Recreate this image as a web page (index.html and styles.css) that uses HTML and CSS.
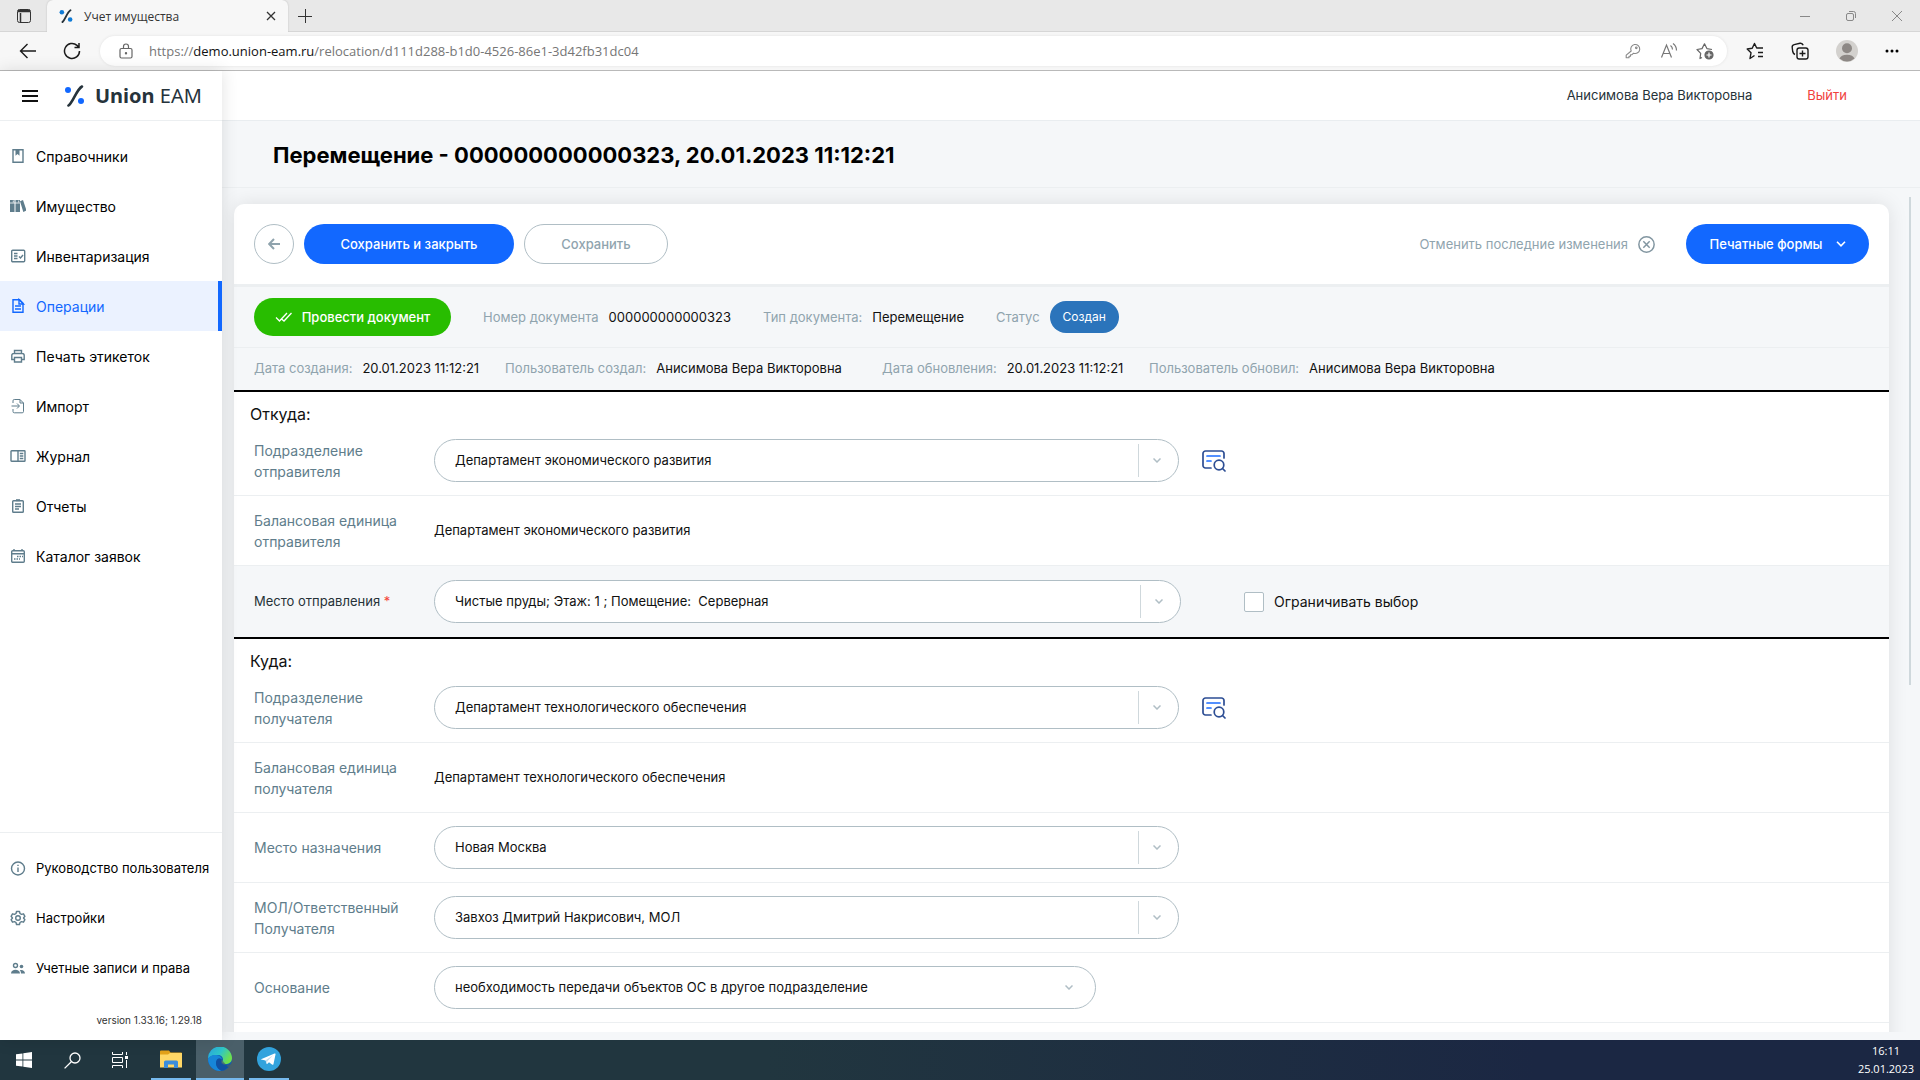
FILE: index.html
```html
<!DOCTYPE html>
<html lang="ru">
<head>
<meta charset="utf-8">
<meta name="viewport" content="width=device-width, initial-scale=1">
<title>Учет имущества</title>
<link rel="stylesheet" href="styles.css">
</head>
<body>
<div class="screen">

  <div class="tabstrip">
    <button class="plain tab-actions" aria-label="Вкладки"><svg width="16" height="16" viewBox="0 0 16 16" fill="none" stroke="#333"><rect x="1.5" y="1.500" width="13" height="13" rx="2"/><path d="M2 3.500h12M2 2.500h12M4.500 5v9.500" stroke-width="1.500"/></svg></button>
    <div class="tab">
      <svg width="14" height="14" viewBox="0 0 21 22"><circle cx="4" cy="5" r="3.600" fill="#0f7bd6"/><circle cx="17" cy="16.500" r="3.600" fill="#0f7bd6"/><path d="M17.500 2C12.500 5 9 17 5 20.500" stroke="#26333b" stroke-width="3" fill="none" stroke-linecap="round"/></svg>
      <span class="tab-title">Учет имущества</span>
      <button class="plain" aria-label="Закрыть вкладку"><svg width="10" height="10" viewBox="0 0 10 10" stroke="#333" stroke-width="1.300"><path d="M1 1l8 8M9 1l-8 8"/></svg></button>
    </div>
    <button class="plain tab-new" aria-label="Новая вкладка"><svg width="14" height="14" viewBox="0 0 14 14" stroke="#333"><path d="M7.500 0v14M0 7.500h14"/></svg></button>
    <div class="win-controls">
      <button class="plain" aria-label="Свернуть"><svg width="10" height="10" viewBox="0 0 10 10" stroke="#888"><path d="M0 5.500h10"/></svg></button>
      <button class="plain" aria-label="Восстановить"><svg width="10" height="10" viewBox="0 0 10 10" stroke="#888" fill="none"><rect x=".5" y="2.500" width="7" height="7" rx="1.500"/><path d="M3 .5h4.500a2 2 0 0 1 2 2V7"/></svg></button>
      <button class="plain" aria-label="Закрыть"><svg width="10" height="10" viewBox="0 0 10 10" stroke="#888"><path d="M0 0l10 10M10 0L0 10"/></svg></button>
    </div>
  </div>

  <div class="toolbar">
    <button class="plain" aria-label="Назад"><svg width="18" height="18" viewBox="0 0 18 18" stroke="#1b1b1b" stroke-width="1.400" fill="none"><path d="M17 9H1.500M8.500 2l-7 7 7 7"/></svg></button>
    <button class="plain" aria-label="Обновить"><svg width="18" height="18" viewBox="0 0 18 18" stroke="#1b1b1b" stroke-width="1.500" fill="none"><path d="M16.500 9a7.500 7.500 0 1 1-2.500-5.600L16 5.500M16 1v4.500h-4.500"/></svg></button>
    <div class="address">
      <svg width="14" height="16" viewBox="0 0 14 16" stroke="#666" fill="none" stroke-width="1.200"><rect x="1" y="5.500" width="12" height="9.500" rx="1.500"/><path d="M4.500 5.500V3.500a2.500 2.500 0 0 1 5 0v2"/><circle cx="7" cy="10.300" r=".6" fill="#666"/></svg>
      <span class="url">https://<b>demo.union-eam.ru</b>/relocation/d111d288-b1d0-4526-86e1-3d42fb31dc04</span>
      <div class="address-icons">
        <svg width="18" height="18" viewBox="0 0 18 18" stroke="#888" fill="none" stroke-width="1.100"><path d="M7.200 9A4.500 4.500 0 1 1 9.600 11.200L8 12.700H6.500v1.600H5v1.500H2.200v-2.600z" stroke-linejoin="round"/><circle cx="12.300" cy="5.800" r=".8"/></svg>
        <svg width="18" height="18" viewBox="0 0 18 18" stroke="#777" fill="none" stroke-width="1.200"><path d="M1.500 15.500L6.500 3l5 12.500M3.200 11.500h6.600M10.500 3.500q2 1.500 2 4M13 1.500q3.500 2.500 3.500 7"/></svg>
        <svg width="18" height="18" viewBox="0 0 18 18" stroke="#666" fill="none" stroke-width="1.200"><path d="M6 15.500l-2 1 .7-5.200L1 7.500l5-.9 2.500-4.800 2.400 4.800 5.100.9" stroke-linejoin="round"/><circle cx="13" cy="13" r="4" fill="#666"/><path d="M13 10.500v5M10.500 13h5" stroke="#fff"/></svg>
      </div>
    </div>
    <div class="toolbar-icons">
      <button class="plain" aria-label="Избранное"><svg width="18" height="18" viewBox="0 0 18 18" stroke="#1b1b1b" fill="none" stroke-width="1.400"><path d="M8.500 13.500L4 16.500l1-5.700L1.200 7l5-.7L8.500 1.500l2.200 4.500H17M12 10.500h5M12 14.500h5" stroke-linejoin="round"/></svg></button>
      <button class="plain" aria-label="Коллекции"><svg width="18" height="18" viewBox="0 0 18 18" stroke="#1b1b1b" fill="none" stroke-width="1.400"><rect x="6" y="6" width="11" height="11" rx="2.200"/><path d="M11.500 8.500v6M8.500 11.500h6M4 12.500C2.500 12 2 11 1.700 9.500L1.200 5.500C1 4 1.700 3 3.200 2.600L9 1.300c1.500-.3 2.700.6 3.200 2"/></svg></button>
      <button class="plain" aria-label="Профиль"><svg width="22" height="22" viewBox="0 0 22 22"><circle cx="11" cy="11" r="11" fill="#d3d1ce"/><circle cx="11" cy="8.300" r="5" fill="#8d8885"/><path d="M3.500 18.500a7.700 5 0 0 1 15 0A11 11 0 0 1 3.500 18.500" fill="#8d8885"/></svg></button>
      <button class="plain" aria-label="Меню браузера"><svg width="14" height="4" viewBox="0 0 14 4"><circle cx="2" cy="2" r="1.500"/><circle cx="7" cy="2" r="1.500"/><circle cx="12" cy="2" r="1.500"/></svg></button>
    </div>
  </div>

  <div class="app">
    <aside class="sidebar">
      <div class="brand">
        <button class="plain" aria-label="Меню"><svg width="16" height="12" viewBox="0 0 16 12" stroke="#111" stroke-width="2"><path d="M0 1h16M0 6h16M0 11h16"/></svg></button>
        <svg width="21" height="22" viewBox="0 0 21 22"><circle cx="4" cy="5" r="3" fill="#1268ff"/><circle cx="17" cy="16" r="3" fill="#1268ff"/><path d="M18 1.500C12.500 4.500 9 17.500 4.500 20.500" stroke="#26333b" stroke-width="2.600" fill="none" stroke-linecap="round"/></svg>
        <span class="brand-name"><b>Union</b> EAM</span>
      </div>
      <nav class="nav">
        <a href="#"><svg viewBox="0 0 16 16"><path d="M3 1.700h10v12.600H3z" class="s"/><path d="M5.500 1.700h4v6l-2-1.800-2 1.800z" class="f"/></svg>Справочники</a>
        <a href="#"><svg viewBox="0 0 16 16"><path d="M0 2h4.500v12H0zM5.500 2H10v12H5.500zM10 3.200l3-1.200 3.500 10.500-3.200 1.500z" class="f"/><path d="M0 5h10M3.300 2.500v2M8.700 2.500v2" stroke="#fff" stroke-width=".8"/></svg>Имущество</a>
        <a href="#"><svg viewBox="0 0 16 16"><rect x="1.700" y="2.200" width="13" height="11.500" rx="1" class="s"/><path d="M4 5.500h3.500M4 8h3.500M4 10.500h3.500M9 8.500l1.500 1.500 2.500-3" class="s"/></svg>Инвентаризация</a>
        <a href="#" class="active"><svg viewBox="0 0 16 16"><path d="M3 1.700h6.500l3.500 3.600v9H3z" class="s"/><path d="M9 1.500V6h4.500zM5 8h6M5 11h6" class="s"/></svg>Операции</a>
        <a href="#"><svg viewBox="0 0 16 16"><path d="M4.500 5.500V2.500h7v3M4.500 11.500H1.800v-4a2 2 0 0 1 2-2h8.400a2 2 0 0 1 2 2v4h-2.700M4.500 9.500h7V14h-7z" class="s"/></svg>Печать этикеток</a>
        <a href="#"><svg viewBox="0 0 16 16"><path d="M3 5V2.800A1.300 1.300 0 0 1 4.300 1.500H10l3.500 3.500v8.500a1.300 1.300 0 0 1-1.300 1.300H4.300A1.300 1.300 0 0 1 3 13.500V11M10 1.500V5h3.500M1.500 8H9M7 5.500L9.500 8 7 10.500" class="s thin"/></svg>Импорт</a>
        <a href="#"><svg viewBox="0 0 16 16"><rect x="1" y="2.700" width="14" height="10.600" rx=".6" class="s"/><path d="M8 2.700v10.600M9.800 5.500h3.500M9.800 8h3.500M9.800 10.500h3.500" class="s"/></svg>Журнал</a>
        <a href="#"><svg viewBox="0 0 16 16"><rect x="2.700" y="2.700" width="10.600" height="11.600" rx=".8" class="s"/><path d="M6 1.200h4v2H6z" class="f"/><path d="M5 6h6M5 8.500h6M5 11h4" class="s"/></svg>Отчеты</a>
        <a href="#"><svg viewBox="0 0 16 16"><rect x="1.700" y="2.700" width="12.600" height="11.600" rx="1" class="s"/><path d="M2 5.800h12M4 1v2M12 1v2" class="s"/><path d="M7 8.500h6M4 11h6" class="s" stroke-dasharray="1.500 1"/></svg>Каталог заявок</a>
      </nav>
      <nav class="nav nav-bottom">
        <a href="#"><svg viewBox="0 0 16 16"><circle cx="8" cy="8.500" r="6.500" class="s"/><path d="M8 7.500v4.500M8 4.800v1.200" class="s"/></svg>Руководство пользователя</a>
        <a href="#"><svg viewBox="0 0 16 16"><path d="M6.500 1.500h3l.5 2 1.500.9 2-.6 1.400 2.500L13.500 8l1.400 1.700-1.400 2.500-2-.6-1.500.9-.5 2h-3l-.5-2-1.500-.9-2 .6-1.400-2.500L2.500 8 1.100 6.300l1.400-2.500 2 .6L6 3.500z" class="s" stroke-linejoin="round"/><circle cx="8" cy="8" r="2.300" class="s"/></svg>Настройки</a>
        <a href="#"><svg viewBox="0 0 16 16"><circle cx="5.500" cy="5.500" r="2" class="s"/><circle cx="11.500" cy="6.500" r="1.800" class="f"/><path d="M1 13.500c0-5 9-5 9 0zM11 13.500c0-1.500-.5-2.500-1.300-3.200 2-1 5.300 0 5.300 3.200z" class="f"/></svg>Учетные записи и права</a>
      </nav>
      <div class="version">version 1.33.16; 1.29.18</div>
    </aside>

    <main class="main">
      <header class="userbar">
        <span>Анисимова Вера Викторовна</span>
        <a href="#" class="logout">Выйти</a>
      </header>
      <div class="page-head"><h1>Перемещение - 000000000000323, 20.01.2023 11:12:21</h1></div>

      <div class="content">
        <form class="card">
          <div class="actions">
            <button type="button" class="btn btn-back" aria-label="Назад"><svg width="12" height="12" viewBox="0 0 12 12" stroke="#8fa3ad" stroke-width="2" fill="none"><path d="M12 6H1.500M6 1L1.200 6 6 11"/></svg></button>
            <button type="button" class="btn btn-primary btn-wide">Сохранить и закрыть</button>
            <button type="button" class="btn btn-outline">Сохранить</button>
            <button type="button" class="plain undo">Отменить последние изменения
              <svg width="17" height="17" viewBox="0 0 16 16" stroke="#8296a1" stroke-width="1.400" fill="none"><circle cx="8" cy="8" r="7.200"/><path d="M5 5l6 6M11 5l-6 6"/></svg></button>
            <button type="button" class="btn btn-primary btn-print">Печатные формы
              <svg width="10" height="6" viewBox="0 0 10 6" stroke="#fff" stroke-width="1.600" fill="none"><path d="M1 .8l4 4 4-4"/></svg></button>
          </div>

          <div class="info info-top">
            <button type="button" class="btn btn-green"><svg width="17" height="10" viewBox="0 0 17 10" stroke="#fff" stroke-width="1.300" fill="none"><path d="M1 5.500l3.500 3.500L12 1M6.500 7L9 9l7.500-8"/></svg>Провести документ</button>
            <div class="pair"><span class="key">Номер документа</span><span>000000000000323</span></div>
            <div class="pair"><span class="key">Тип документа:</span><span>Перемещение</span></div>
            <div class="pair"><span class="key">Статус</span><span class="status">Создан</span></div>
          </div>
          <div class="info info-meta">
            <div class="pair"><span class="key">Дата создания:</span><span>20.01.2023 11:12:21</span></div>
            <div class="pair"><span class="key">Пользователь создал:</span><span>Анисимова Вера Викторовна</span></div>
            <div class="pair"><span class="key">Дата обновления:</span><span>20.01.2023 11:12:21</span></div>
            <div class="pair"><span class="key">Пользователь обновил:</span><span>Анисимова Вера Викторовна</span></div>
          </div>

          <section class="group">
            <h2>Откуда:</h2>
            <div class="row">
              <label class="label" for="from-dept">Подразделение отправителя</label>
              <div class="combo split"><select id="from-dept"><option>Департамент экономического развития</option></select><span class="arrow"><svg width="8" height="5" viewBox="0 0 8 5"><path d="M.5.5L4 4 7.500.5"/></svg></span></div>
              <button type="button" class="plain lookup" aria-label="Найти подразделение отправителя"><svg width="24" height="22" viewBox="0 0 24 22" fill="none" stroke="#2d4e94" stroke-width="1.700" stroke-linecap="round"><path d="M9 18H3.500A2.500 2.500 0 0 1 1 15.500v-12A2.500 2.500 0 0 1 3.500 1h16A2.500 2.500 0 0 1 22 3.500V8"/><circle cx="17" cy="15" r="4.800"/><path d="M20.500 18.500L23 21"/><path d="M5 6h13M5 11h4" stroke="#1b6cff"/></svg></button>
            </div>
            <div class="row">
              <span class="label">Балансовая единица отправителя</span>
              <span class="value">Департамент экономического развития</span>
            </div>
            <div class="row row-shaded">
              <label class="label label-strong" for="from-place">Место отправления <span class="req">*</span></label>
              <div class="combo split combo-place"><select id="from-place"><option>Чистые пруды; Этаж: 1 ; Помещение:&nbsp; Серверная</option></select><span class="arrow"><svg width="8" height="5" viewBox="0 0 8 5"><path d="M.5.5L4 4 7.500.5"/></svg></span></div>
              <label class="check"><input type="checkbox">Ограничивать выбор</label>
            </div>
          </section>

          <section class="group">
            <h2>Куда:</h2>
            <div class="row">
              <label class="label" for="to-dept">Подразделение получателя</label>
              <div class="combo split"><select id="to-dept"><option>Департамент технологического обеспечения</option></select><span class="arrow"><svg width="8" height="5" viewBox="0 0 8 5"><path d="M.5.5L4 4 7.500.5"/></svg></span></div>
              <button type="button" class="plain lookup" aria-label="Найти подразделение получателя"><svg width="24" height="22" viewBox="0 0 24 22" fill="none" stroke="#2d4e94" stroke-width="1.700" stroke-linecap="round"><path d="M9 18H3.500A2.500 2.500 0 0 1 1 15.500v-12A2.500 2.500 0 0 1 3.500 1h16A2.500 2.500 0 0 1 22 3.500V8"/><circle cx="17" cy="15" r="4.800"/><path d="M20.500 18.500L23 21"/><path d="M5 6h13M5 11h4" stroke="#1b6cff"/></svg></button>
            </div>
            <div class="row">
              <span class="label">Балансовая единица получателя</span>
              <span class="value">Департамент технологического обеспечения</span>
            </div>
            <div class="row">
              <label class="label" for="to-place">Место назначения</label>
              <div class="combo split"><select id="to-place"><option>Новая Москва</option></select><span class="arrow"><svg width="8" height="5" viewBox="0 0 8 5"><path d="M.5.5L4 4 7.500.5"/></svg></span></div>
            </div>
            <div class="row">
              <label class="label" for="to-person">МОЛ/Ответственный Получателя</label>
              <div class="combo split"><select id="to-person"><option>Завхоз Дмитрий Накрисович, МОЛ</option></select><span class="arrow"><svg width="8" height="5" viewBox="0 0 8 5"><path d="M.5.5L4 4 7.500.5"/></svg></span></div>
            </div>
            <div class="row">
              <label class="label" for="reason">Основание</label>
              <div class="combo combo-reason"><select id="reason"><option>необходимость передачи объектов ОС в другое подразделение</option></select><span class="arrow"><svg width="8" height="5" viewBox="0 0 8 5"><path d="M.5.5L4 4 7.500.5"/></svg></span></div>
            </div>
          </section>
        </form>
      </div>
      <div class="scroll-thumb"></div>
    </main>
  </div>

  <footer class="taskbar">
    <button class="plain task" aria-label="Пуск"><svg width="16" height="16" viewBox="0 0 16 16" fill="#fff"><path d="M0 2.300l6.500-.9v6.200H0zM7.300 1.300L16 0v7.600H7.300zM0 8.400h6.500v6.200L0 13.700zM7.300 8.400H16V16l-8.700-1.300z"/></svg></button>
    <button class="plain task" aria-label="Поиск"><svg width="17" height="17" viewBox="0 0 17 17" fill="none" stroke="#fff" stroke-width="1.300"><circle cx="11" cy="6" r="5"/><path d="M7.300 9.700L.6 16.400"/></svg></button>
    <button class="plain task" aria-label="Просмотр задач"><svg width="17" height="16" viewBox="0 0 17 16" fill="none" stroke="#fff"><path d="M.5 0v2.500h10V0M.5 16v-2.500h10V16M.5 5.500h10v5H.5zM14.500 0v3M14.500 8v8"/><path d="M13 4h3v3h-3z" fill="#fff" stroke="none"/></svg></button>
    <button class="plain task task-gap running" aria-label="Проводник"><svg width="22" height="18" viewBox="0 0 22 18"><path d="M0 1.500A1 1 0 0 1 1 .500h8l1.500 2H21a1 1 0 0 1 1 1V16.500H0z" fill="#e3a21a"/><path d="M0 4.500h8l2-1.500h12v14.500H0z" fill="#ffd766"/><path d="M4 18v-6a1.500 1.500 0 0 1 1.500-1.500h11A1.500 1.500 0 0 1 18 12v6h-4v-3.500H8V18z" fill="#3b8ddb"/></svg></button>
    <button class="plain task running current" aria-label="Браузер"><svg width="24" height="24" viewBox="0 0 24 24"><defs><linearGradient id="e1" x1="0" y1="0" x2="1" y2="0.500"><stop offset="0" stop-color="#2aa5e0"/><stop offset=".55" stop-color="#2fc6c8"/><stop offset="1" stop-color="#6ee04c"/></linearGradient></defs><circle cx="12" cy="12" r="12" fill="#0f5fb4"/><path d="M0 12A12 12 0 0 1 24 11c0 4-3 6-6.500 6-3 0-4-1.500-3-3 1.500-2.500-.5-6-5-6C5 8 1 9.500 0 12z" fill="url(#e1)"/><path d="M0 12c.8-2.700 4.500-4.500 8.500-4 3.500.4 5.500 2.500 5.200 4.500C11 10 8 12.500 8 16c0 3.500 2.500 6.500 6 7.800C6 25 0 19 0 12z" fill="#1786d8"/><path d="M8 16c0-3.500 3-6 5.700-3.500-1.800 3 .3 5.500 4.300 5.500 2 0 3.500-.5 4.500-1C20 21 17 23.500 13.500 23.800 10.500 22.500 8 19.500 8 16z" fill="#1150a0"/><path d="M13.700 12.500c-1.800 3 .3 5.500 4.300 5.500 2.300 0 4-.9 5.200-1.600l.8 1.300V20l-4 .2z" fill="#4a5f69" opacity=".65"/></svg></button>
    <button class="plain task task-small running" aria-label="Telegram"><svg width="24" height="24" viewBox="0 0 24 24"><circle cx="12" cy="12" r="12" fill="#32a3dd"/><path d="M4 12.300L17.500 6.500c.7-.3 1.200.1 1 1l-2 9.500c-.2.900-.8 1-1.500.6l-3-2.300-1.600 1.500c-.3.300-.8.200-.9-.2l-.9-3.200-4.500-.8c-.5-.1-.5-.2-.1-.300z" fill="#fff"/><path d="M8.700 13.300l7.300-5-5.600 5.900-.5 2.600z" fill="#c3dcec"/></svg></button>
    <div class="clock"><span>16:11</span><span>25.01.2023</span></div>
  </footer>
</div>
</body>
</html>
```
FILE: styles.css
```css
* { box-sizing: border-box; }

body {
  margin: 0;
  font-family: Inter, "Noto Sans", sans-serif;
  font-size: 14px;
  line-height: 21px;
  color: #111;
}

button, select, input { font: inherit; color: inherit; }
svg { display: block; flex: none; }
a { color: inherit; text-decoration: none; }

.plain {
  display: flex;
  align-items: center;
  justify-content: center;
  padding: 0;
  border: 0;
  background: none;
}

.screen {
  display: flex;
  flex-direction: column;
  height: 100vh;
  min-height: 600px;
}

/* Browser frame */
.tabstrip {
  display: flex;
  align-items: center;
  flex: none;
  height: 32px;
  background: #e8e8e8;
  box-shadow: inset 0 -1px 0 #d6d6d6;
  font-family: "Open Sans", "Noto Sans", sans-serif;
  font-size: 12px;
}
.tab-actions { width: 47px; }
.tab {
  display: flex;
  align-items: center;
  gap: 11px;
  width: 241px;
  height: 32px;
  padding: 0 12px;
  border-radius: 6px 6px 0 0;
  background: #f7f7f7;
  box-shadow: 0 0 2px #bbb;
  clip-path: inset(-2px -2px 0 -2px);
  color: #333;
}
.tab-title { flex: 1; }
.tab-new { margin-left: 10px; }
.win-controls {
  display: flex;
  gap: 36px;
  margin-left: auto;
  padding-right: 18px;
}

.toolbar {
  display: flex;
  align-items: center;
  flex: none;
  gap: 26px;
  height: 39px;
  padding: 0 21px 0 19px;
  border-bottom: 1px solid #b9b9b9;
  background: #f7f7f7;
}
.address {
  display: flex;
  align-items: center;
  flex: 1;
  gap: 16px;
  height: 30px;
  margin-left: -7px;
  padding: 0 13px 0 19px;
  border-radius: 15px;
  background: #fff;
  box-shadow: 0 0 3px #e0e0e0;
}
.url {
  flex: 1;
  font-family: "Open Sans", "Noto Sans", sans-serif;
  font-size: 13px;
  color: #767676;
}
.url b { font-weight: 400; color: #111; }
.address-icons { display: flex; gap: 18px; }
.toolbar-icons { display: flex; align-items: center; gap: 27px; margin-left: -7px; }

/* Application shell */
.app { display: flex; flex: 1; min-height: 0; }

.sidebar {
  display: flex;
  flex-direction: column;
  flex: none;
  z-index: 1;
  width: 222px;
  background: #fff;
  box-shadow: 0 0 16px rgba(0, 0, 0, .12);
}
.brand {
  display: flex;
  align-items: center;
  height: 50px;
  padding-left: 22px;
  border-bottom: 1px solid #eceff1;
}
.brand svg { margin-right: 10px; }
.brand .plain svg { margin-right: 26px; }
.brand-name {
  font-family: "Noto Sans", sans-serif;
  font-size: 20px;
  color: #26333b;
}
.nav { padding-top: 10px; }
.nav a {
  display: flex;
  align-items: center;
  gap: 10px;
  height: 50px;
  padding-left: 10px;
  color: #000;
  white-space: nowrap;
}
.nav svg { width: 16px; height: 16px; color: #5f7d8c; }
.nav .s { fill: none; stroke: currentColor; stroke-width: 1.400; }
.nav .thin { stroke-width: 1; }
.nav .f { fill: currentColor; }
.nav .active {
  border-right: 4px solid #1268ff;
  background: #ebf2ff;
  color: #1268ff;
}
.nav .active svg { color: #1268ff; }
.nav-bottom {
  margin-top: auto;
  border-top: 1px solid #eceff1;
  font-size: 13px;
}
.version {
  padding: 17px 20px 9px 0;
  font-size: 10px;
  text-align: right;
  color: #333;
}

.main {
  position: relative;
  display: flex;
  flex-direction: column;
  flex: 1;
  min-width: 0;
  background: #f5f7f9;
}
.userbar {
  display: flex;
  align-items: center;
  justify-content: flex-end;
  flex: none;
  gap: 55px;
  height: 50px;
  padding-right: 73px;
  border-bottom: 1px solid #e9edf0;
  background: #fff;
  font-size: 13px;
  color: #263238;
}
.logout { color: #f0413c; }
.page-head {
  flex: none;
  height: 67px;
  padding: 16px 0 0 51px;
  border-bottom: 1px solid #eceff1;
}
h1 {
  margin: 0;
  font-size: 22px;
  font-weight: 700;
  line-height: 36px;
  color: #000;
}

.content {
  flex: 1;
  min-height: 0;
  margin-bottom: 8px;
  padding: 16px 31px 0 12px;
  overflow: hidden;
}
.card {
  padding-bottom: 40px;
  border-radius: 10px 10px 0 0;
  background: #fff;
  box-shadow: 0 0 20px rgba(0, 0, 0, .1);
}
.scroll-thumb {
  position: absolute;
  top: 126px;
  right: 9px;
  width: 2px;
  height: 488px;
  background: #cfd8dc;
}

.actions {
  display: flex;
  align-items: center;
  gap: 10px;
  height: 83px;
  padding: 0 20px;
  border-bottom: 3px solid #eceff1;
  font-size: 13px;
}
.btn {
  display: flex;
  align-items: center;
  justify-content: center;
  height: 40px;
  padding: 0;
  border: 0;
  border-radius: 20px;
  font-weight: 500;
}
.btn-back { width: 40px; border: 1px solid #b0bec5; background: #fff; }
.btn-primary { background: #1268ff; color: #fff; }
.btn-wide { width: 210px; }
.btn-outline { width: 144px; border: 1px solid #b0bec5; background: #fff; color: #90a4ae; }
.undo { gap: 10px; margin-left: auto; color: #90a4ae; }
.btn-print { gap: 13px; width: 183px; margin-left: 21px; }
.btn-green { gap: 10px; width: 197px; height: 38px; background: #28bd00; color: #fff; }

.info {
  display: flex;
  align-items: center;
  gap: 32px;
  padding: 0 20px;
  background: #f5f7f9;
  font-size: 13px;
  white-space: nowrap;
}
.info-top { height: 61px; border-bottom: 1px solid #eceff1; }
.info-meta {
  display: grid;
  grid-template-columns: 251px 377px 267px auto;
  gap: 0;
  height: 42px;
  padding-bottom: 2px;
}
.pair { display: flex; align-items: center; gap: 10px; }
.key { color: #90a4ae; }
.status {
  padding: 0 13px;
  border-radius: 16px;
  background: #2b74bb;
  font-size: 12px;
  line-height: 32px;
  color: #fff;
}

.group { border-top: 2px solid #000; }
h2 {
  margin: 0;
  padding: 11px 16px 1px;
  font-size: 16px;
  font-weight: 400;
  line-height: 22px;
}
.row {
  display: flex;
  align-items: center;
  height: 70px;
  padding-left: 20px;
  border-bottom: 1px solid #eceff1;
}
.row-shaded { height: 71px; border-bottom: 0; background: #f5f7f9; }
.label { flex: none; width: 180px; padding-right: 20px; color: #607d8b; }
.label-strong { font-size: 13px; color: #263238; }
.req { color: #f44336; }
.value { font-size: 13px; }

.combo { position: relative; width: 745px; font-size: 13px; }
.combo-place { width: 747px; }
.combo-reason { width: 662px; }
.combo select {
  display: block;
  width: 100%;
  height: 43px;
  padding: 0 60px 0 20px;
  border: 1px solid #b0bec5;
  border-radius: 22px;
  background: #fff;
  appearance: none;
}
.arrow {
  position: absolute;
  top: 5px;
  right: 1px;
  display: flex;
  align-items: center;
  width: 40px;
  height: 33px;
  padding-left: 14px;
  pointer-events: none;
}
.split .arrow { border-left: 1px solid #cfd8dc; }
.arrow path { fill: none; stroke: #b0bec5; stroke-width: 1.500; }
.combo-reason .arrow { right: 5px; }
.lookup { margin-left: 23px; }
.check { display: flex; align-items: center; gap: 10px; margin-left: 63px; }
.check input {
  width: 20px;
  height: 20px;
  margin: 0;
  border: 1px solid #b0bec5;
  border-radius: 2px;
  background: #fff;
  appearance: none;
}

/* Desktop taskbar */
.taskbar {
  display: flex;
  flex: none;
  height: 40px;
  background: linear-gradient(90deg, #21363f 0, #21363f 40%, #1b2743 80%);
  font-family: "Open Sans", "Noto Sans", sans-serif;
  font-size: 11px;
  color: #fff;
}
.task { width: 48px; }
.task.running { width: 40px; border-bottom: 2px solid #76b9ed; }
.task.running.task-gap { margin: 0 5px 0 7px; }
.task.running.current { width: 48px; background: #4a5f69; }
.task.running.task-small { margin-left: 5px; }
.clock {
  display: flex;
  flex-direction: column;
  justify-content: center;
  margin-left: auto;
  padding-right: 6px;
  line-height: 18px;
  text-align: center;
}
```
